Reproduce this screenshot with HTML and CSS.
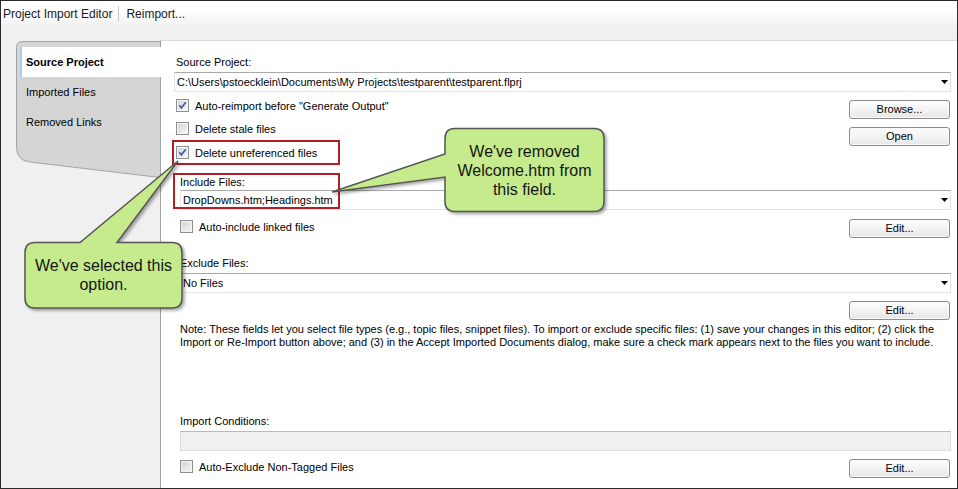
FILE: index.html
```html
<!DOCTYPE html>
<html>
<head>
<meta charset="utf-8">
<link rel="stylesheet" href="styles.css">
</head>
<body>
<div class="frame">
  <div class="toolbar">
    <span class="tb-item">Project Import Editor</span>
    <span class="tb-sep"></span>
    <span class="tb-item">Reimport...</span>
  </div>
  <div class="main">
    <div class="side">
      <div class="tabpanel">
        <svg class="tabpanel-bg" width="144" height="138" viewBox="0 0 144 138"><path d="M144 0.5 H6.5 Q0.5 0.5 0.5 6.5 V106 Q0.5 119.5 14 121 L144 136.5" fill="#d5d5d5" stroke="#a4a4a4"/></svg>
        <ul class="tabs">
          <li class="tab active">Source Project</li>
          <li class="tab">Imported Files</li>
          <li class="tab">Removed Links</li>
        </ul>
      </div>
    </div>
    <div class="content">
      <div class="label">Source Project:</div>
      <div class="combo combo-source"><span>C:\Users\pstoecklein\Documents\My Projects\testparent\testparent.flprj</span><svg class="arrow" width="7" height="4" viewBox="0 0 7 4"><path d="M0 0H7L3.5 4Z" fill="#000"/></svg></div>
      <div class="source-row">
        <div class="checks">
          <div class="check"><span class="box"><svg width="11" height="11" viewBox="0 0 11 11"><path d="M2.3 5.2 L4.4 7.8 L8.8 2.2" fill="none" stroke="#3f5f9f" stroke-width="1.7"/></svg></span>Auto-reimport before "Generate Output"</div>
          <div class="check"><span class="box"></span>Delete stale files</div>
          <div class="check hl"><span class="box"><svg width="11" height="11" viewBox="0 0 11 11"><path d="M2.3 5.2 L4.4 7.8 L8.8 2.2" fill="none" stroke="#3f5f9f" stroke-width="1.7"/></svg></span>Delete unreferenced files</div>
        </div>
        <div class="btn-col">
          <button class="btn">Browse...</button>
          <button class="btn">Open</button>
        </div>
      </div>

      <div class="sect include">
        <div class="label">Include Files:</div>
        <div class="combo"><span>DropDowns.htm;Headings.htm</span><svg class="arrow" width="7" height="4" viewBox="0 0 7 4"><path d="M0 0H7L3.5 4Z" fill="#000"/></svg></div>
        <div class="opt-row">
          <div class="check"><span class="box"></span>Auto-include linked files</div>
          <button class="btn">Edit...</button>
        </div>
      </div>

      <div class="sect exclude">
        <div class="label">Exclude Files:</div>
        <div class="combo"><span>No Files</span><svg class="arrow" width="7" height="4" viewBox="0 0 7 4"><path d="M0 0H7L3.5 4Z" fill="#000"/></svg></div>
        <div class="btn-right"><button class="btn">Edit...</button></div>
        <p class="note">Note: These fields let you select file types (e.g., topic files, snippet files). To import or exclude specific files: (1) save your changes in this editor; (2) click the<br>Import or Re-Import button above; and (3) in the Accept Imported Documents dialog, make sure a check mark appears next to the files you want to include.</p>
      </div>

      <div class="sect conditions">
        <div class="label">Import Conditions:</div>
        <div class="field"></div>
        <div class="opt-row">
          <div class="check"><span class="box"></span>Auto-Exclude Non-Tagged Files</div>
          <button class="btn">Edit...</button>
        </div>
      </div>
    </div>
  </div>

  <svg class="callouts" width="958" height="489" viewBox="0 0 958 489">
    <defs>
      <filter id="sh" x="-20%" y="-20%" width="140%" height="140%">
        <feDropShadow dx="2" dy="2" stdDeviation="1.4" flood-color="#000" flood-opacity="0.35"/>
      </filter>
    </defs>
    <path d="M455 128.5 H594 Q604 128.5 604 138.5 V201.5 Q604 211.5 594 211.5 H455 Q445 211.5 445 201.5 V177 L332 192 L445 154 V138.5 Q445 128.5 455 128.5 Z" fill="#c5eb8c" stroke="#555" stroke-width="1.5" filter="url(#sh)"/>
    <path d="M35 242.5 H80 L178 161 L117 242.5 H172 Q182 242.5 182 252.5 V298 Q182 308 172 308 H35 Q25 308 25 298 V252.5 Q25 242.5 35 242.5 Z" fill="#c5eb8c" stroke="#555" stroke-width="1.5" filter="url(#sh)"/>
  </svg>
  <div class="callout-text c1">We've removed<br>Welcome.htm from<br>this field.</div>
  <div class="callout-text c2">We've selected this<br>option.</div>
</div>
</body>
</html>
```

FILE: styles.css
```css
html, body {
  margin: 0;
  padding: 0;
}
body {
  width: 958px;
  height: 489px;
  overflow: hidden;
  font-family: "Liberation Sans", Arial, sans-serif;
  font-size: 11px;
  color: #000;
  background: #fff;
}
.frame {
  box-sizing: border-box;
  width: 958px;
  height: 489px;
  border: 1px solid #2a2a2a;
  background: #f0f0f0;
  display: flex;
  flex-direction: column;
}
.toolbar {
  flex: none;
  height: 25px;
  display: flex;
  align-items: center;
  padding-left: 2px;
  background: linear-gradient(#ffffff 30%, #f2f2f2);
  font-size: 12px;
  color: #1a1a1a;
}
.tb-sep {
  width: 1px;
  height: 16px;
  background: #c8c8c8;
  margin: 0 7px 0 6px;
}
.main {
  flex: 1;
  display: flex;
  padding-top: 14px;
  min-height: 0;
}
.side {
  flex: none;
  width: 159px;
}
.tabpanel {
  position: relative;
  margin: 1px 0 0 15px;
  width: 144px;
  height: 138px;
}
.tabpanel-bg {
  position: absolute;
  left: 0;
  top: 0;
}
.tabs {
  position: relative;
  z-index: 1;
  list-style: none;
  margin: 0;
  padding: 6px 0 0;
}
.tab {
  height: 30px;
  margin-left: 4px;
  padding-left: 4px;
  border-left: 2px solid transparent;
  display: flex;
  align-items: center;
}
.tab.active {
  background: #fff;
  border-left-color: #a8cdef;
  font-weight: bold;
  margin-right: -1px;
}
.content {
  flex: 1;
  min-width: 0;
  background: #fff;
  border-left: 1px solid #a3a3a3;
  border-top: 1px solid #dadada;
  padding: 14px 6px 0 15px;
}
.label {
  height: 14px;
  line-height: 14px;
  white-space: nowrap;
}
.combo {
  box-sizing: border-box;
  height: 20px;
  margin-top: 3px;
  border: 1px solid #e2e2e2;
  border-top-color: #a8a8a8;
  display: flex;
  align-items: center;
  justify-content: space-between;
  padding: 0 2px 0 2px;
  background: #fff;
  white-space: nowrap;
}
.combo-source {
  margin-left: -2px;
}
.arrow {
  flex: none;
}
.source-row {
  display: flex;
  justify-content: space-between;
  margin-top: 2px;
}
.checks {
  display: flex;
  flex-direction: column;
}
.check {
  display: flex;
  align-items: center;
  gap: 6px;
  height: 23px;
  white-space: nowrap;
}
.check.hl {
  position: relative;
  height: 25px;
}
.check.hl::after {
  content: "";
  position: absolute;
  left: -4px;
  top: 0;
  width: 168px;
  height: 25px;
  box-sizing: border-box;
  border: 2px solid #b01f28;
}
.box {
  box-sizing: border-box;
  flex: none;
  width: 13px;
  height: 13px;
  border: 1px solid #8e8f8f;
  background: linear-gradient(135deg, #cfd0d2 0%, #f3f3f3 85%);
  box-shadow: inset 0 0 0 1px #f6f6f6;
  display: flex;
}
.btn-col {
  display: flex;
  flex-direction: column;
  gap: 8px;
  margin-top: 6px;
}
.btn {
  box-sizing: border-box;
  width: 101px;
  height: 19px;
  margin: 0 1px 0 0;
  padding: 0;
  border: 1px solid #8a8a8a;
  border-radius: 3px;
  background: linear-gradient(#fdfdfd 0%, #f3f3f3 50%, #e6e6e6 100%);
  box-shadow: inset 0 0 0 1px #fbfbfb;
  font-family: "Liberation Sans", Arial, sans-serif;
  font-size: 11px;
  color: #000;
  line-height: 17px;
  text-align: center;
}
.sect {
  position: relative;
  padding-left: 4px;
}
.include {
  padding-top: 10px;
}
.include .combo {
  margin-top: 1px;
}
.include::after {
  content: "";
  position: absolute;
  left: -3px;
  top: 8px;
  width: 167px;
  height: 36px;
  box-sizing: border-box;
  border: 2px solid #b01f28;
}
.opt-row {
  display: flex;
  justify-content: space-between;
  align-items: flex-start;
  margin-top: 9px;
}
.opt-row .check {
  height: 13px;
  margin-top: 1px;
}
.exclude {
  padding-top: 18px;
}
.btn-right {
  display: flex;
  justify-content: flex-end;
  margin-top: 8px;
}
.note {
  margin: 3px 0 0;
  line-height: 13px;
  white-space: nowrap;
}
.conditions {
  padding-top: 65px;
}
.field {
  box-sizing: border-box;
  height: 20px;
  margin-top: 3px;
  background: #f0f0f0;
  border: 1px solid #dcdcdc;
  border-top-color: #b9b9b9;
}
.conditions .opt-row {
  margin-top: 8px;
}
.callouts {
  position: absolute;
  left: 0;
  top: 0;
  pointer-events: none;
}
.callout-text {
  position: absolute;
  display: flex;
  align-items: center;
  justify-content: center;
  text-align: center;
  font-family: "Liberation Sans", Arial, sans-serif;
  font-size: 16px;
  line-height: 19px;
  color: #151515;
}
.c1 {
  left: 445px;
  top: 128px;
  width: 159px;
  height: 84px;
}
.c2 {
  left: 25px;
  top: 242px;
  width: 157px;
  height: 66px;
}
```
